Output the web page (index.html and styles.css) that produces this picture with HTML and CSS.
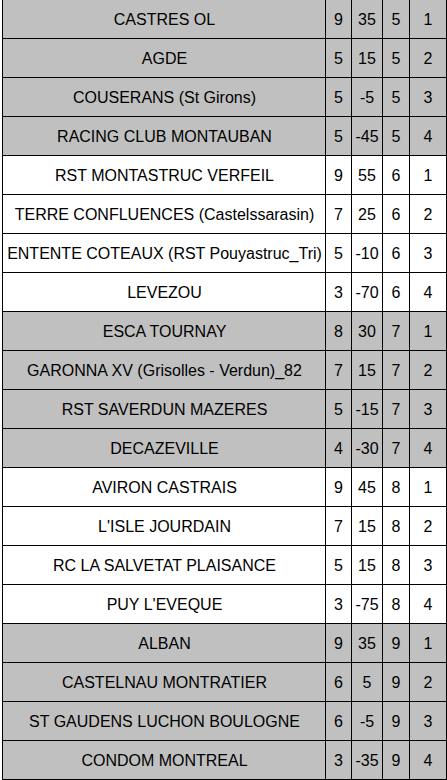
FILE: index.html
```html
<!DOCTYPE html>
<html lang="fr">
<head>
<meta charset="utf-8">
<link rel="stylesheet" href="styles.css">
</head>
<body>
<div class="table">
  <div class="row gray"><div class="cell name">CASTRES OL</div><div class="cell">9</div><div class="cell">35</div><div class="cell">5</div><div class="cell">1</div></div>
  <div class="row gray"><div class="cell name">AGDE</div><div class="cell">5</div><div class="cell">15</div><div class="cell">5</div><div class="cell">2</div></div>
  <div class="row gray"><div class="cell name">COUSERANS (St Girons)</div><div class="cell">5</div><div class="cell">-5</div><div class="cell">5</div><div class="cell">3</div></div>
  <div class="row gray"><div class="cell name">RACING CLUB MONTAUBAN</div><div class="cell">5</div><div class="cell">-45</div><div class="cell">5</div><div class="cell">4</div></div>
  <div class="row"><div class="cell name">RST MONTASTRUC VERFEIL</div><div class="cell">9</div><div class="cell">55</div><div class="cell">6</div><div class="cell">1</div></div>
  <div class="row"><div class="cell name">TERRE CONFLUENCES (Castelssarasin)</div><div class="cell">7</div><div class="cell">25</div><div class="cell">6</div><div class="cell">2</div></div>
  <div class="row"><div class="cell name">ENTENTE COTEAUX (RST Pouyastruc_Tri)</div><div class="cell">5</div><div class="cell">-10</div><div class="cell">6</div><div class="cell">3</div></div>
  <div class="row"><div class="cell name">LEVEZOU</div><div class="cell">3</div><div class="cell">-70</div><div class="cell">6</div><div class="cell">4</div></div>
  <div class="row gray"><div class="cell name">ESCA TOURNAY</div><div class="cell">8</div><div class="cell">30</div><div class="cell">7</div><div class="cell">1</div></div>
  <div class="row gray"><div class="cell name">GARONNA XV (Grisolles - Verdun)_82</div><div class="cell">7</div><div class="cell">15</div><div class="cell">7</div><div class="cell">2</div></div>
  <div class="row gray"><div class="cell name">RST SAVERDUN MAZERES</div><div class="cell">5</div><div class="cell">-15</div><div class="cell">7</div><div class="cell">3</div></div>
  <div class="row gray"><div class="cell name">DECAZEVILLE</div><div class="cell">4</div><div class="cell">-30</div><div class="cell">7</div><div class="cell">4</div></div>
  <div class="row"><div class="cell name">AVIRON CASTRAIS</div><div class="cell">9</div><div class="cell">45</div><div class="cell">8</div><div class="cell">1</div></div>
  <div class="row"><div class="cell name">L'ISLE JOURDAIN</div><div class="cell">7</div><div class="cell">15</div><div class="cell">8</div><div class="cell">2</div></div>
  <div class="row"><div class="cell name">RC LA SALVETAT PLAISANCE</div><div class="cell">5</div><div class="cell">15</div><div class="cell">8</div><div class="cell">3</div></div>
  <div class="row"><div class="cell name">PUY L'EVEQUE</div><div class="cell">3</div><div class="cell">-75</div><div class="cell">8</div><div class="cell">4</div></div>
  <div class="row gray"><div class="cell name">ALBAN</div><div class="cell">9</div><div class="cell">35</div><div class="cell">9</div><div class="cell">1</div></div>
  <div class="row gray"><div class="cell name">CASTELNAU MONTRATIER</div><div class="cell">6</div><div class="cell">5</div><div class="cell">9</div><div class="cell">2</div></div>
  <div class="row gray"><div class="cell name">ST GAUDENS LUCHON BOULOGNE</div><div class="cell">6</div><div class="cell">-5</div><div class="cell">9</div><div class="cell">3</div></div>
  <div class="row gray"><div class="cell name">CONDOM MONTREAL</div><div class="cell">3</div><div class="cell">-35</div><div class="cell">9</div><div class="cell">4</div></div>
</div>
</body>
</html>
```

FILE: styles.css
```css
html, body {
  margin: 0;
  padding: 0;
  background: #ffffff;
}
body {
  font-family: "Liberation Sans", Arial, sans-serif;
  font-size: 16px;
  color: #000;
}
.table {
  margin-left: 2px;
  width: 444px;
  border-left: 1px solid #000;
}
.row {
  display: grid;
  grid-template-columns: 323px 26px 31px 27px 37px;
  height: 39px;
  background: #ffffff;
}
.row.gray {
  background: #c0c0c0;
}
.cell {
  box-sizing: border-box;
  border-right: 1px solid #000;
  border-bottom: 1px solid #000;
  padding-top: 2px;
  display: flex;
  align-items: center;
  justify-content: center;
  white-space: nowrap;
}
.name {
  padding-left: 1px;
}
```
